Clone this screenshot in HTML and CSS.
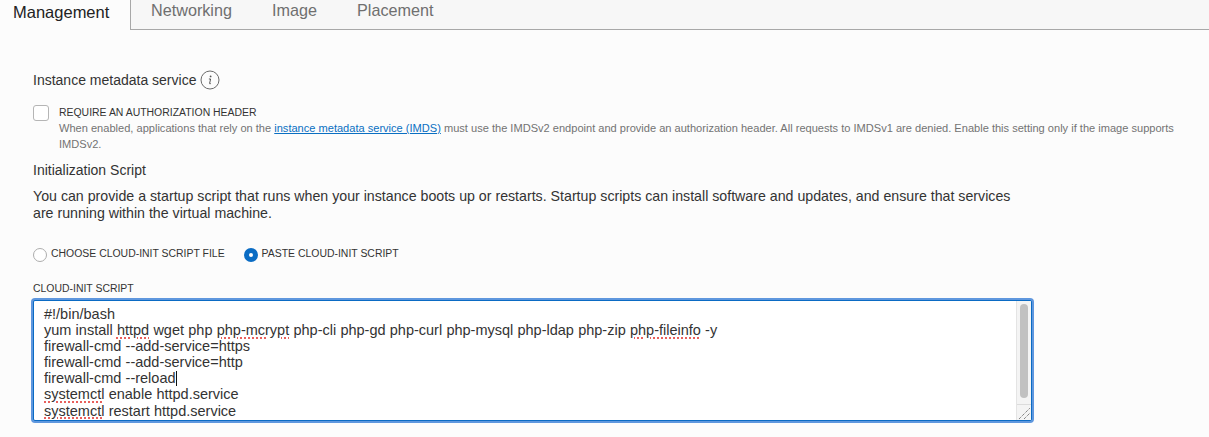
FILE: index.html
```html
<!DOCTYPE html>
<html lang="en">
<head>
<meta charset="utf-8">
<title>Management</title>
<link rel="stylesheet" href="styles.css">
</head>
<body>
<nav class="tabs">
  <div class="tab tab-active">Management</div>
  <div class="tab-rest">
    <span class="tab">Networking</span>
    <span class="tab">Image</span>
    <span class="tab">Placement</span>
  </div>
</nav>
<main class="content">
  <div class="heading-row">
    <span class="heading">Instance metadata service</span>
    <svg class="info" width="20" height="20" viewBox="0 0 20 20" aria-hidden="true">
      <circle cx="10" cy="10" r="9" fill="none" stroke="#6b6b6b" stroke-width="1"/>
      <circle cx="10.6" cy="6.4" r="0.9" fill="#555"/>
      <path d="M8.9 9h1.7l-1 4.4c-.1.5.3.6 1.2.1" fill="none" stroke="#555" stroke-width="1"/>
    </svg>
  </div>
  <div class="check-row">
    <span class="checkbox"></span>
    <div class="check-text">
      <div class="caps check-label">REQUIRE AN AUTHORIZATION HEADER</div>
      <p class="hint">When enabled, applications that rely on the <a href="#">instance metadata service (IMDS)</a> must use the IMDSv2 endpoint and provide an authorization header. All requests to IMDSv1 are denied. Enable this setting only if the image supports IMDSv2.</p>
    </div>
  </div>
  <h2 class="heading init-title">Initialization Script</h2>
  <p class="intro">You can provide a startup script that runs when your instance boots up or restarts. Startup scripts can install software and updates, and ensure that services are running within the virtual machine.</p>
  <div class="radios">
    <label class="radio-item"><span class="radio"></span><span class="caps">CHOOSE CLOUD-INIT SCRIPT FILE</span></label>
    <label class="radio-item"><span class="radio radio-on"></span><span class="caps">PASTE CLOUD-INIT SCRIPT</span></label>
  </div>
  <div class="caps field-label">CLOUD-INIT SCRIPT</div>
  <div class="editor">
    <div class="code">
      <div>#!/bin/bash</div>
      <div>yum install <u>httpd</u> wget php <u>php-mcrypt</u> php-cli php-gd php-curl php-mysql php-ldap php-zip <u>php-fileinfo</u> -y</div>
      <div>firewall-cmd --add-service=https</div>
      <div>firewall-cmd --add-service=http</div>
      <div>firewall-cmd --reload<span class="caret"></span></div>
      <div><u>systemctl</u> enable httpd.service</div>
      <div><u>systemctl</u> restart httpd.service</div>
    </div>
    <div class="scrollbar">
      <div class="track"><div class="thumb"></div></div>
      <div class="grip">
        <svg width="14" height="14" viewBox="0 0 14 14" aria-hidden="true">
          <path d="M2 13 13 2M7 13l6-6" stroke="#555" stroke-width="1" stroke-dasharray="1 1" fill="none"/>
        </svg>
      </div>
    </div>
  </div>
</main>
</body>
</html>
```

FILE: styles.css
```css
* { box-sizing: border-box; }
html, body { margin: 0; padding: 0; }
body {
  width: 1209px;
  height: 437px;
  overflow: hidden;
  background: #fcfcfc;
  font-family: "Liberation Sans", Arial, sans-serif;
  color: #333;
}
.tabs { display: flex; height: 30px; }
.tab { font-size: 16.2px; line-height: 20px; color: #6f6f6f; }
.tab-active {
  width: 131px;
  padding: 2px 0 0 13px;
  font-size: 16.5px;
  color: #222;
  background: #fcfcfc;
  border-right: 1px solid #a8a8a8;
}
.tab-rest {
  flex: 1;
  display: flex;
  gap: 40px;
  padding: 0 0 0 20px;
  background: #f7f7f7;
  border-bottom: 1px solid #a8a8a8;
}
.content { padding: 40px 0 0 33px; }
.heading-row { display: flex; align-items: center; gap: 4px; height: 20px; }
.heading { font-size: 14px; line-height: 20px; font-weight: 400; color: #333; margin: 0; }
.info { flex: none; }
.check-row { display: flex; gap: 10px; margin-top: 15px; }
.checkbox {
  flex: none;
  width: 16px;
  height: 16px;
  background: #fff;
  border: 1px solid #b5b5b5;
  border-radius: 3px;
}
.check-text { width: 1125px; padding-top: 0.5px; }
.caps { font-size: 10.45px; line-height: 14px; color: #333; }
.check-label { line-height: 14.5px; }
.hint { margin: 0; font-size: 11.07px; line-height: 16px; color: #737373; }
.hint a { color: #0a6fc2; }
.init-title { margin-top: 8px; }
.intro { margin: 8px 0 0; width: 985px; font-size: 14.2px; line-height: 17px; color: #333; }
.radios { display: flex; gap: 19px; margin-top: 25px; height: 22px; }
.radio-item { display: flex; gap: 4px; }
.radio {
  flex: none;
  width: 14px;
  height: 14px;
  margin-top: 1px;
  background: #fff;
  border: 1px solid #adadad;
  border-radius: 50%;
}
.radio-on { background: #fff; border: 5px solid #0a6cc4; }
.field-label { margin-top: 13px; }
.editor {
  display: flex;
  width: 999px;
  height: 121px;
  margin-top: 4px;
  background: #fff;
  border: 1px solid #0b6bc4;
  border-radius: 2px;
  box-shadow: 0 0 0 2px #5f97de;
  overflow: hidden;
}
.code { flex: 1; padding: 5px 0 0 10px; font-size: 14.5px; line-height: 16.1px; word-spacing: 0.2px; color: #333; white-space: nowrap; overflow: hidden; }
.code u { text-decoration: underline dotted #e8605c 2px; text-underline-offset: 2px; }
.caret { display: inline-block; width: 1px; height: 15px; background: #111; vertical-align: -3px; }
.scrollbar { flex: none; width: 15px; display: flex; flex-direction: column; background: #f4f4f4; border-left: 1px solid #e4e4e4; }
.track { flex: 1; padding: 3px 3px 0 3px; }
.thumb { height: 94px; background: #c1c1c1; border-radius: 4px; }
.grip { flex: none; height: 16px; background: #f4f4f4; border-top: 1px solid #dcdcdc; display: flex; justify-content: flex-end; align-items: flex-end; }
```
